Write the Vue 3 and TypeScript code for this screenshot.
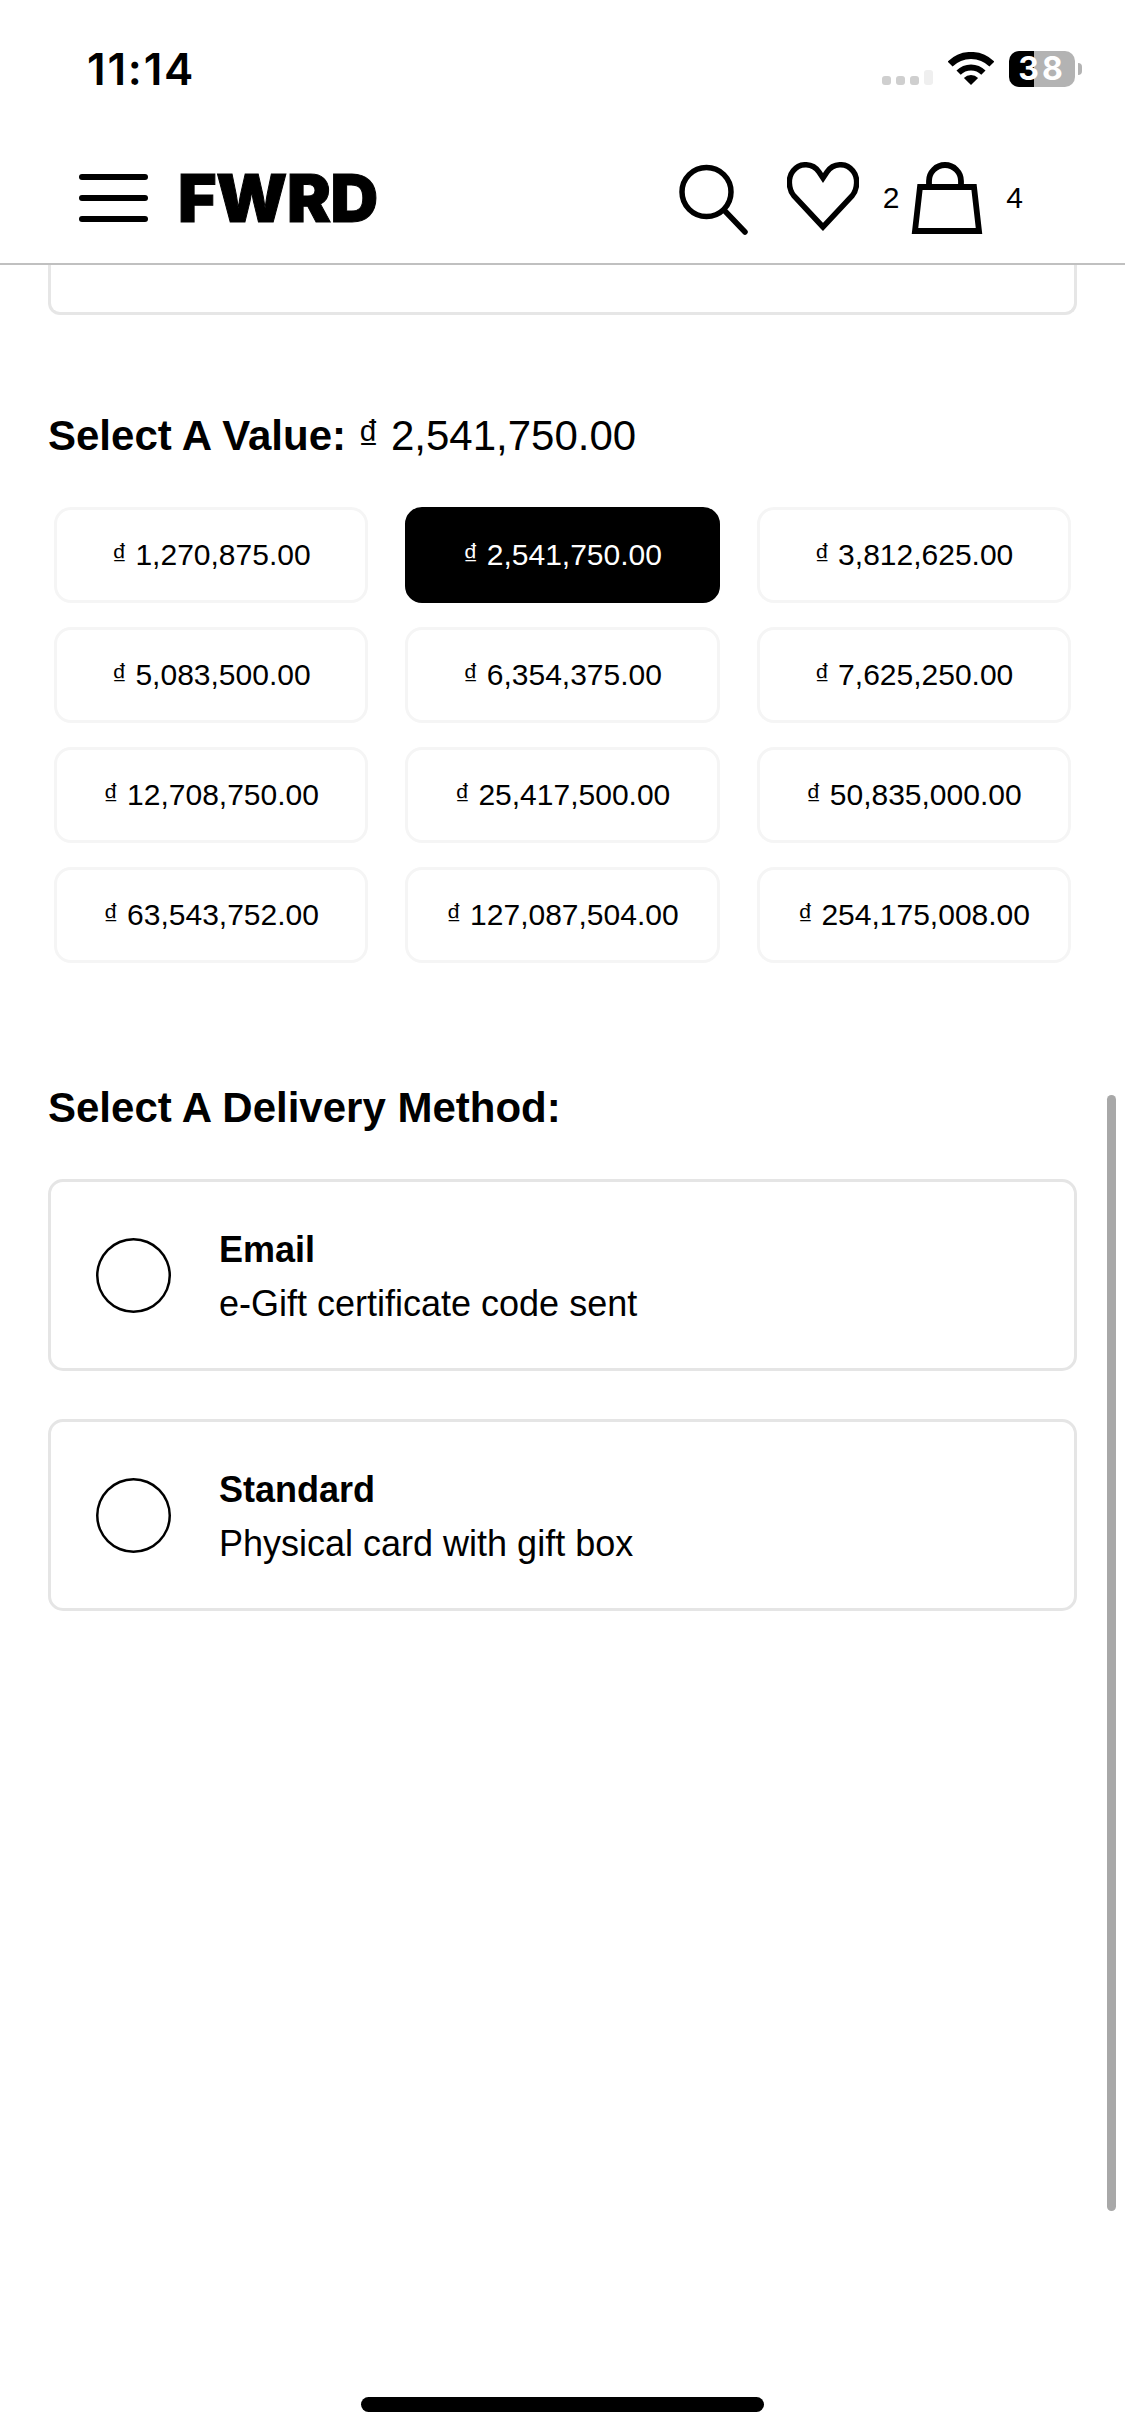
<script setup lang="ts">
import { ref } from 'vue'

const values: string[] = [
  '1,270,875.00', '2,541,750.00', '3,812,625.00',
  '5,083,500.00', '6,354,375.00', '7,625,250.00',
  '12,708,750.00', '25,417,500.00', '50,835,000.00',
  '63,543,752.00', '127,087,504.00', '254,175,008.00',
]
const selected = ref('2,541,750.00')
const methods = [
  { name: 'Email', note: 'e-Gift certificate code sent' },
  { name: 'Standard', note: 'Physical card with gift box' },
]
</script>

<template>
  <div class="page">
    <div class="status">
      <span class="time">11:14</span>
      <div class="status-right">
        <div class="signal"><i></i><i></i><i></i><i class="tall"></i></div>
        <svg class="wifi" width="46" height="33" viewBox="0 0 46 33">
          <path d="M2.1 12.1A29.5 29.5 0 0 1 43.9 12.1" fill="none" stroke="#000" stroke-width="7" />
          <path d="M10.6 20.6A17.5 17.5 0 0 1 35.4 20.6" fill="none" stroke="#000" stroke-width="6" />
          <path d="M23 33L15.9 25.9A10 10 0 0 1 30.1 25.9Z" fill="#000" />
        </svg>
        <div class="battery"><span>38</span></div>
        <div class="nub"></div>
      </div>
    </div>

    <header class="nav">
      <div class="burger"><i></i><i></i><i></i></div>
      <span class="logo">FWRD</span>
      <svg class="search" width="72" height="75" viewBox="0 0 72 75" fill="none" stroke="#000" stroke-width="5.5">
        <circle cx="29.5" cy="30" r="24.5" />
        <path d="M47 48L68 70" stroke-linecap="round" />
      </svg>
      <svg class="heart" width="72" height="70" viewBox="0 0 72 70" fill="none" stroke="#000" stroke-width="5.5">
        <path d="M36 65L7 34C1 27 1 15 6 9C13 0 26 1 32 10L36 16L40 10C46 1 59 0 66 9C71 15 71 27 65 34Z" />
      </svg>
      <span class="count count-wish">2</span>
      <svg class="bag" width="72" height="72" viewBox="0 0 72 72" fill="none" stroke="#000" stroke-width="5.8">
        <path d="M9 25H63L68 69H4Z" />
        <path d="M18 25V19A16 16 0 0 1 50 19V25" />
      </svg>
      <span class="count count-bag">4</span>
    </header>

    <main class="content">
      <div class="clipped-card"></div>

      <h2 class="title title-value">
        Select A Value:
        <span class="title-amount">₫ 2,541,750.00</span>
      </h2>

      <div class="grid">
        <button
          v-for="v in values"
          :key="v"
          class="amount"
          :class="{ active: v === selected }"
          type="button"
          @click="selected = v"
        >
          ₫ {{ v }}
        </button>
      </div>

      <h2 class="title title-delivery">Select A Delivery Method:</h2>

      <div class="methods">
        <label v-for="m in methods" :key="m.name" class="method">
          <span class="radio"></span>
          <span class="method-text">
            <strong>{{ m.name }}</strong>
            <span class="method-note">{{ m.note }}</span>
          </span>
        </label>
      </div>
    </main>

    <div class="home"></div>
    <div class="scrollbar"></div>
  </div>
</template>

<style>
html, body { margin: 0; background: #fff; }
</style>

<style scoped>
.page {
  position: relative;
  width: 1125px;
  height: 2436px;
  overflow: hidden;
  display: flex;
  flex-direction: column;
  background: #fff;
  color: #000;
  font-family: "Liberation Sans", Arial, sans-serif;
}
.status {
  height: 100px;
  display: flex;
  justify-content: space-between;
  padding: 0 43px 0 87px;
  box-sizing: border-box;
  flex: none;
}
.time {
  font-family: Inter, sans-serif;
  font-weight: 600;
  font-size: 44px;
  line-height: 50px;
  margin-top: 44px;
  letter-spacing: 1.8px;
}
.status-right { display: flex; align-items: flex-start; padding-top: 51px; }
.signal { display: flex; align-items: flex-end; gap: 5px; height: 15px; margin-top: 19px; }
.signal i { width: 9px; height: 9px; border-radius: 3px; background: #cfcfcf; }
.signal i.tall { height: 15px; background: #efefef; }
.wifi { margin: 1px 15px 0; }
.battery {
  width: 66px;
  height: 36px;
  border-radius: 10px;
  background: linear-gradient(90deg, #000 38%, #b3b3b3 38%);
  display: flex;
  align-items: center;
  justify-content: center;
  color: #fff;
  font-family: Inter, sans-serif;
  font-weight: 700;
  font-size: 32px;
  line-height: 36px;
  letter-spacing: 3px;
}
.nub {
  width: 4px;
  height: 12px;
  margin: 12px 0 0 3px;
  border-radius: 0 6px 6px 0;
  background: #b3b3b3;
}
.nav {
  height: 165px;
  box-sizing: border-box;
  border-bottom: 2px solid #c0c0c0;
  padding: 62px 102px 0 79px;
  display: flex;
  align-items: flex-start;
  flex: none;
  position: relative;
  z-index: 1;
}
.burger {
  width: 69px;
  height: 48px;
  margin-top: 12px;
  display: flex;
  flex-direction: column;
  justify-content: space-between;
}
.burger i { height: 6px; border-radius: 3px; background: #000; }
.logo {
  font-family: Inter, sans-serif;
  font-weight: 900;
  font-size: 66px;
  line-height: 48px;
  letter-spacing: -0.5px;
  -webkit-text-stroke: 1px #000;
  margin: 12px 0 0 30px;
}
.search { margin: 0 0 0 auto; }
.heart { margin-left: 38px; }
.bag { margin-left: 12px; }
.count { font-size: 30px; line-height: 32px; margin-top: 20px; }
.count-wish { margin-left: 24px; }
.count-bag { margin-left: 23px; }
.content { padding: 0 48px; flex: none; }
.clipped-card {
  height: 50px;
  box-sizing: border-box;
  border: 3px solid #e6e6e6;
  border-top: 0;
  border-radius: 0 0 12px 12px;
}
.title { margin: 0; font-size: 42px; line-height: 50px; font-weight: 700; }
.title-value { margin-top: 96px; }
.title-amount { font-weight: 400; }
.grid {
  display: grid;
  grid-template-columns: repeat(3, 1fr);
  column-gap: 37px;
  row-gap: 24px;
  margin: 46px 6px 0;
}
.amount {
  height: 96px;
  box-sizing: border-box;
  padding: 0;
  border: 3px solid #f5f5f5;
  border-radius: 17px;
  background: #fff;
  color: #000;
  font-family: inherit;
  font-size: 30px;
}
.amount.active { background: #000; border-color: #000; color: #fff; }
.title-delivery { margin-top: 120px; }
.methods { display: flex; flex-direction: column; gap: 48px; margin-top: 46px; }
.method {
  height: 192px;
  box-sizing: border-box;
  border: 3px solid #e5e5e5;
  border-radius: 15px;
  display: flex;
  align-items: center;
  gap: 48px;
  padding-left: 45px;
}
.radio {
  width: 75px;
  height: 75px;
  border-radius: 50%;
  box-shadow: inset 0 0 0 2.5px #000;
  flex: none;
}
.method-text { display: flex; flex-direction: column; font-size: 36px; line-height: 53px; padding-top: 2px; }
.method-text strong { font-weight: 700; }
.method-note { margin-top: 1px; }
.home {
  width: 403px;
  height: 15px;
  border-radius: 8px;
  background: #000;
  margin: auto auto 24px;
  flex: none;
}
.scrollbar {
  position: absolute;
  left: 1107px;
  top: 1095px;
  width: 9px;
  height: 1116px;
  border-radius: 5px;
  background: #a8a8a8;
}
</style>
